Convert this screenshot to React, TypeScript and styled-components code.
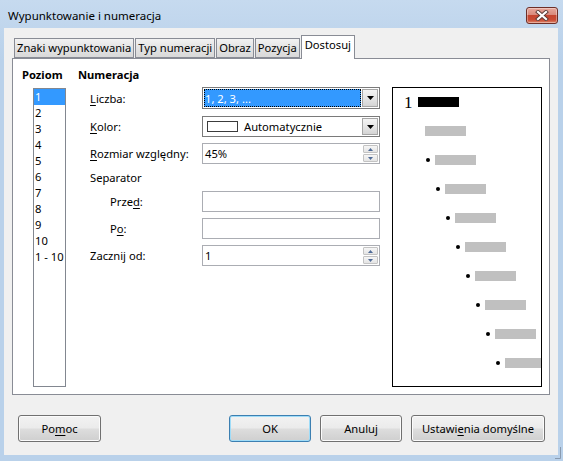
import React from 'react';
import styled, { createGlobalStyle } from 'styled-components';

const GlobalStyle = createGlobalStyle`
  html, body { margin: 0; padding: 0; }
  body {
    font-family: "Noto Sans", "Liberation Sans", sans-serif;
    font-size: 11.2px;
    color: #000;
  }
  * { box-sizing: border-box; }
`;

const Window = styled.div`
  position: relative;
  width: 563px;
  height: 461px;
  display: flex;
  flex-direction: column;
  padding: 0 5px 6px 4px;
  background: linear-gradient(#c6daef, #b9d1ea 60px, #b9d1ea);
`;

const TitleBar = styled.div`
  height: 28px;
  flex-shrink: 0;
  display: flex;
  align-items: flex-start;
  justify-content: space-between;
`;

const Title = styled.div`
  margin: 8px 0 0 4px;
  line-height: 16px;
  font-size: 11.5px;
  white-space: nowrap;
`;

const CloseButton = styled.div`
  margin-top: 7px;
  width: 32px;
  height: 17px;
  display: flex;
  align-items: center;
  justify-content: center;
  border: 1px solid #6d2f28;
  border-radius: 3px;
  background: linear-gradient(#e7a89c 0%, #d98a7c 45%, #c5452f 50%, #c94c35 80%, #e08a6e 100%);
  box-shadow: inset 0 0 0 1px rgba(255, 255, 255, 0.35);
`;

const Client = styled.div`
  flex: 1;
  display: flex;
  flex-direction: column;
  padding: 7px 0 0 8px;
  background: #f0f0f0;
`;

const TabStrip = styled.div`
  display: flex;
  align-items: flex-end;
  height: 23px;
  padding-left: 2px;
  position: relative;
  z-index: 1;
`;

const Tab = styled.div<{ $active?: boolean }>`
  height: ${p => (p.$active ? 24 : 20)}px;
  margin-bottom: ${p => (p.$active ? -1 : 0)}px;
  margin-right: 1px;
  padding: ${p => (p.$active ? '1px 3px 0' : '0 2px')};
  display: flex;
  align-items: ${p => (p.$active ? 'flex-start' : 'center')};
  border: 1px solid #898c95;
  border-bottom: ${p => (p.$active ? 'none' : '1px solid #898c95')};
  background: ${p => (p.$active ? '#fff' : 'linear-gradient(#f2f2f2, #e3e3e3 50%, #d9d9d9)')};
  line-height: 16px;
  white-space: nowrap;
`;

const Panel = styled.div`
  width: 538px;
  height: 337px;
  border: 1px solid #898c95;
  background: #fff;
`;

const PanelBody = styled.div`
  display: flex;
  align-items: flex-start;
  padding: 8px 0 0 9px;
`;

const LevelColumn = styled.div`
  width: 56px;
  display: flex;
  flex-direction: column;
`;

const Heading = styled.div`
  height: 16px;
  line-height: 16px;
  font-weight: bold;
  white-space: nowrap;
`;

const LevelList = styled.div`
  margin: 5px 0 0 11px;
  width: 33px;
  height: 299px;
  border: 1px solid #828790;
  background: #fff;
  overflow: hidden;
`;

const LevelItem = styled.div<{ $selected?: boolean }>`
  height: 16px;
  line-height: 16px;
  padding-left: 1px;
  white-space: nowrap;
  background: ${p => (p.$selected ? '#3399ff' : 'transparent')};
  color: ${p => (p.$selected ? '#fff' : '#000')};
`;

const NumberingColumn = styled.div`
  width: 302px;
  display: flex;
  flex-direction: column;
`;

const FormRow = styled.div<{ $h: number; $mt: number }>`
  display: flex;
  align-items: center;
  height: ${p => p.$h}px;
  margin-top: ${p => p.$mt}px;
`;

const FieldLabel = styled.div<{ $indent?: boolean }>`
  width: 124px;
  flex-shrink: 0;
  padding-left: ${p => (p.$indent ? 32 : 12)}px;
  white-space: nowrap;
`;

const Acc = styled.span`
  text-decoration: underline;
  text-underline-offset: 2px;
`;

const ComboBox = styled.div`
  width: 178px;
  height: 100%;
  display: flex;
  padding: 1px;
  border: 1px solid #7a7a7a;
  background: #fff;
`;

const ComboValue = styled.div<{ $focused?: boolean }>`
  flex: 1;
  display: flex;
  align-items: center;
  gap: 6px;
  padding-left: ${p => (p.$focused ? 1 : 3)}px;
  background: ${p => (p.$focused ? '#3399ff' : 'transparent')};
  color: ${p => (p.$focused ? '#fff' : '#000')};
  outline: ${p => (p.$focused ? '1px dotted #000' : 'none')};
  outline-offset: -1px;
  white-space: nowrap;
`;

const Swatch = styled.div`
  width: 31px;
  height: 11px;
  border: 1px solid #3c3c3c;
  background: #fff;
`;

const DropButton = styled.div`
  width: 16px;
  margin-left: 1px;
  display: flex;
  align-items: center;
  justify-content: center;
  border: 1px solid #a6a6a6;
  background: linear-gradient(#f4f4f4, #e6e6e6 50%, #d4d4d4);
`;

const TextField = styled.div`
  width: 178px;
  height: 100%;
  display: flex;
  align-items: center;
  padding: 0 1px 0 2px;
  border: 1px solid #abadb3;
  background: #fff;
`;

const FieldText = styled.div`
  flex: 1;
  white-space: nowrap;
`;

const Spin = styled.div`
  width: 15px;
  height: 17px;
  display: flex;
  flex-direction: column;
  gap: 1px;
`;

const SpinButton = styled.div`
  flex: 1;
  display: flex;
  align-items: center;
  justify-content: center;
  border: 1px solid #c3c3c3;
  border-radius: 1px;
  background: linear-gradient(#f6f6f6, #e4e4e4);
`;

const Preview = styled.div`
  margin: 20px 0 0 12px;
  width: 150px;
  height: 300px;
  padding-top: 9px;
  border: 1px solid #000;
  background: #fff;
  overflow: hidden;
`;

const PreviewRow = styled.div`
  display: flex;
  align-items: center;
  height: 10px;
  margin-bottom: 19px;
`;

const PreviewNumber = styled.span`
  width: 14px;
  flex-shrink: 0;
  align-self: flex-start;
  padding-top: 1px;
  font-family: "Liberation Serif", serif;
  font-size: 17px;
  line-height: 10px;
`;

const Bullet = styled.span`
  width: 4px;
  height: 4px;
  margin-right: 5px;
  flex-shrink: 0;
  border-radius: 50%;
  background: #000;
`;

const Bar = styled.span<{ $dark?: boolean }>`
  width: 41px;
  height: 10px;
  flex-shrink: 0;
  background: ${p => (p.$dark ? '#000' : '#c0c0c0')};
`;

const ButtonRow = styled.div`
  width: 538px;
  display: flex;
  gap: 9px;
  margin-top: 20px;
  padding: 0 5px 0 6px;
`;

const Spacer = styled.div`
  flex: 1;
`;

const DialogButton = styled.div<{ $w: number; $default?: boolean }>`
  width: ${p => p.$w}px;
  height: 27px;
  display: flex;
  align-items: center;
  justify-content: center;
  border: 1px solid ${p => (p.$default ? '#3c7fb1' : '#707070')};
  border-radius: 3px;
  background: linear-gradient(#f2f2f2 0%, #ebebeb 48%, #dddddd 52%, #cfcfcf 100%);
  box-shadow: inset 0 0 0 1px ${p => (p.$default ? '#9fdcf8' : '#fbfbfb')};
  white-space: nowrap;
`;

const Grip = styled.svg`
  position: absolute;
  right: 2px;
  bottom: 2px;
`;

const ArrowDown = () => (
  <svg width="7" height="4" viewBox="0 0 7 4">
    <path d="M0 0h7L3.5 4z" fill="#000" />
  </svg>
);

const SpinArrow = ({ up }: { up?: boolean }) => (
  <svg width="5" height="3" viewBox="0 0 5 3">
    <path d={up ? 'M0 3h5L2.5 0z' : 'M0 0h5L2.5 3z'} fill="#4f6b98" />
  </svg>
);

const SpinBox = () => (
  <Spin>
    <SpinButton><SpinArrow up /></SpinButton>
    <SpinButton><SpinArrow /></SpinButton>
  </Spin>
);

const tabs = ['Znaki wypunktowania', 'Typ numeracji', 'Obraz', 'Pozycja', 'Dostosuj'];
const levels = ['1', '2', '3', '4', '5', '6', '7', '8', '9', '10', '1 - 10'];

function PreviewArea() {
  const rows = Array.from({ length: 10 }, (_, i) => i);
  return (
    <Preview>
      {rows.map(i => {
        if (i === 0) {
          return (
            <PreviewRow key={i} style={{ paddingLeft: 11 }}>
              <PreviewNumber>1</PreviewNumber>
              <Bar $dark />
            </PreviewRow>
          );
        }
        if (i === 1) {
          return (
            <PreviewRow key={i} style={{ paddingLeft: 32 }}>
              <Bar />
            </PreviewRow>
          );
        }
        return (
          <PreviewRow key={i} style={{ paddingLeft: 33 + (i - 2) * 10 }}>
            <Bullet />
            <Bar />
          </PreviewRow>
        );
      })}
    </Preview>
  );
}

export default function App() {
  return (
    <>
      <GlobalStyle />
      <Window>
        <TitleBar>
          <Title>Wypunktowanie i numeracja</Title>
          <CloseButton>
            <svg width="14" height="11" viewBox="0 0 14 11">
              <path d="M3 2l8 7M11 2l-8 7" stroke="#5a3a36" strokeWidth="4" strokeLinecap="square" />
              <path d="M3 2l8 7M11 2l-8 7" stroke="#fff" strokeWidth="2.2" strokeLinecap="square" />
            </svg>
          </CloseButton>
        </TitleBar>
        <Client>
          <TabStrip>
            {tabs.map(t => (
              <Tab key={t} $active={t === 'Dostosuj'}>{t}</Tab>
            ))}
          </TabStrip>
          <Panel>
            <PanelBody>
              <LevelColumn>
                <Heading>Poziom</Heading>
                <LevelList>
                  {levels.map((l, i) => (
                    <LevelItem key={l} $selected={i === 0}>{l}</LevelItem>
                  ))}
                </LevelList>
              </LevelColumn>
              <NumberingColumn>
                <Heading>Numeracja</Heading>
                <FormRow $h={22} $mt={4}>
                  <FieldLabel><Acc>L</Acc>iczba:</FieldLabel>
                  <ComboBox>
                    <ComboValue $focused>1, 2, 3, ...</ComboValue>
                    <DropButton><ArrowDown /></DropButton>
                  </ComboBox>
                </FormRow>
                <FormRow $h={21} $mt={7}>
                  <FieldLabel><Acc>K</Acc>olor:</FieldLabel>
                  <ComboBox>
                    <ComboValue><Swatch />Automatycznie</ComboValue>
                    <DropButton><ArrowDown /></DropButton>
                  </ComboBox>
                </FormRow>
                <FormRow $h={21} $mt={6}>
                  <FieldLabel><Acc>R</Acc>ozmiar względny:</FieldLabel>
                  <TextField>
                    <FieldText>45%</FieldText>
                    <SpinBox />
                  </TextField>
                </FormRow>
                <FormRow $h={16} $mt={5}>
                  <FieldLabel>Separator</FieldLabel>
                </FormRow>
                <FormRow $h={21} $mt={6}>
                  <FieldLabel $indent>Prze<Acc>d</Acc>:</FieldLabel>
                  <TextField />
                </FormRow>
                <FormRow $h={21} $mt={6}>
                  <FieldLabel $indent>P<Acc>o</Acc>:</FieldLabel>
                  <TextField />
                </FormRow>
                <FormRow $h={21} $mt={6}>
                  <FieldLabel>Zacznij od:</FieldLabel>
                  <TextField>
                    <FieldText>1</FieldText>
                    <SpinBox />
                  </TextField>
                </FormRow>
              </NumberingColumn>
              <PreviewArea />
            </PanelBody>
          </Panel>
          <ButtonRow>
            <DialogButton $w={83}>Po<Acc>m</Acc>oc</DialogButton>
            <Spacer />
            <DialogButton $w={82} $default>OK</DialogButton>
            <DialogButton $w={82}>Anuluj</DialogButton>
            <DialogButton $w={134}>Ustawi<Acc>e</Acc>nia domyślne</DialogButton>
          </ButtonRow>
        </Client>
        <Grip width="6" height="12" viewBox="0 0 6 12">
          <path d="M5.5 0v11.5H0" stroke="#8a9bb0" fill="none" />
        </Grip>
      </Window>
    </>
  );
}
